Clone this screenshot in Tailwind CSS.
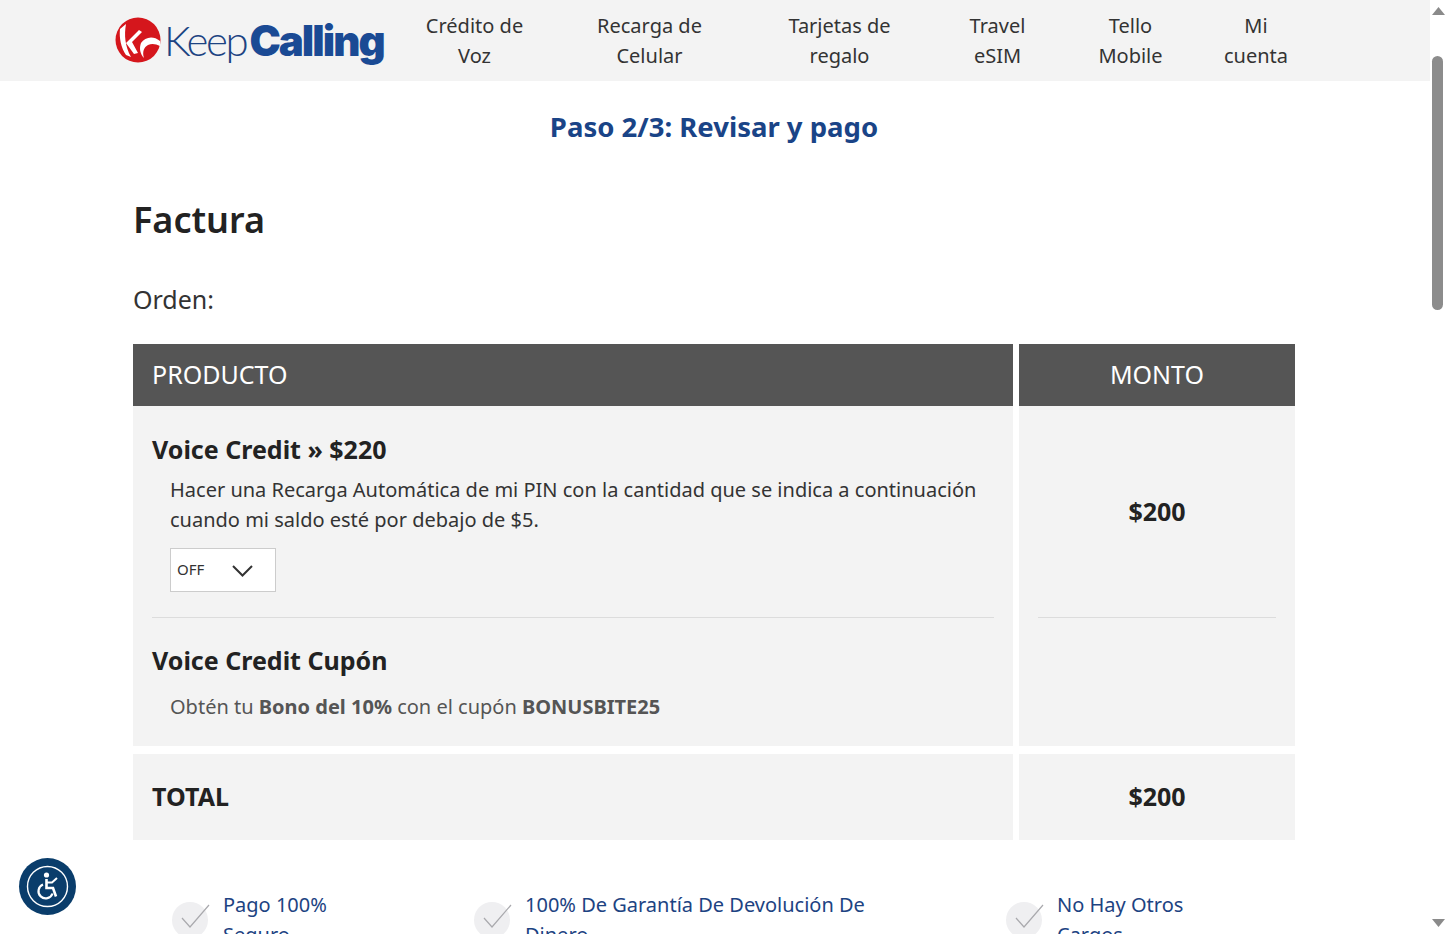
<!DOCTYPE html>
<html lang="es">
<head>
<meta charset="utf-8">
<title>Factura</title>
<script src="https://cdn.jsdelivr.net/npm/@tailwindcss/browser@4"></script>
</head>
<body class="relative h-[934px] w-[1447px] overflow-hidden bg-white font-['Noto_Sans',sans-serif] text-[#222]">
<header class="flex h-[81px] w-[1430px] bg-[#f3f3f3]">
  <a class="ml-[115px] flex h-[81px] w-[273.5px] items-center pb-[2px]">
    <svg class="h-[46px] w-[46px] shrink-0" viewBox="0 0 46 46">
      <circle cx="23" cy="23" r="22.5" fill="#d5161c"/>
      <path d="M5 12 L11 7 C9 18 10 29 16 40 L11 38 C6 31 4 21 5 12 Z" fill="#fff"/>
      <path d="M11 26 L24 13 L27 15 L17 25 L23 36 L19 37 Z" fill="#fff"/>
      <path d="M45 24 C38 18 30 20 26 26 C24 31 25 37 29 41 C27 35 29 30 33 28 C37 26 41 27 45 29 Z" fill="#fff"/>
    </svg>
    <span class="ml-[3px] font-['Lato',sans-serif] text-[42px] leading-none font-light tracking-[-2.4px] text-[#1d4382]">Keep</span><span class="ml-[3px] mt-[3px] font-['Inter',sans-serif] text-[42px] leading-none font-black tracking-[-2px] text-[#1a4a94]">Calling</span>
  </a>
  <nav class="flex text-center text-[20px] leading-[30px] text-[#333]">
    <a class="w-[172px] pt-[11px]">Crédito de<br>Voz</a>
    <a class="w-[178px] pt-[11px]">Recarga de<br>Celular</a>
    <a class="w-[202px] pt-[11px]">Tarjetas de<br>regalo</a>
    <a class="w-[114px] pt-[11px]">Travel<br>eSIM</a>
    <a class="w-[152px] pt-[11px]">Tello<br>Mobile</a>
    <a class="w-[99px] pt-[11px]">Mi<br>cuenta</a>
  </nav>
</header>

<main class="ml-[133px] w-[1162px]">
  <h2 class="mt-[25px] text-center text-[27.5px] leading-[42px] font-bold text-[#1a4487]">Paso 2/3: Revisar y pago</h2>
  <h1 class="mt-[48px] text-[36px] leading-[48px] font-semibold text-[#222]">Factura</h1>
  <p class="mt-[36px] text-[25px] leading-[38px] text-[#333]">Orden:</p>

  <div class="mt-[26px] grid grid-cols-[880px_276px] gap-x-[6px]">
    <div class="flex h-[62px] items-center bg-[#555] pl-[19px] text-[25px] text-white">PRODUCTO</div>
    <div class="flex h-[62px] items-center justify-center bg-[#555] text-[25px] text-white">MONTO</div>

    <div class="h-[340px] bg-[#f3f3f3] px-[19px]">
      <div class="h-[212px] border-b border-[#dcdcdc]">
        <h3 class="pt-[25px] text-[25px] leading-[36px] font-bold text-[#222]">Voice Credit » $220</h3>
        <p class="mt-[8px] pl-[18px] text-[20px] leading-[30px] text-[#333]">Hacer una Recarga Automática de mi PIN con la cantidad que se indica a continuación<br>cuando mi saldo esté por debajo de $5.</p>
        <div class="mt-[13px] ml-[18px] flex h-[44px] w-[106px] items-center border border-[#ccc] bg-white pl-[6px] text-[15px] text-[#333]">
          <span class="mt-[-2px]">OFF</span>
          <svg class="ml-[28px] mt-[2px] h-[12px] w-[21px]" viewBox="0 0 21 12" fill="none" stroke="#333" stroke-width="2"><path d="M1 1 L10.5 10.5 L20 1"/></svg>
        </div>
      </div>
      <h3 class="pt-[24px] text-[25px] leading-[36px] font-bold text-[#222]">Voice Credit Cupón</h3>
      <p class="mt-[14px] pl-[18px] text-[20px] leading-[30px] text-[#555]">Obtén tu <b class="font-bold">Bono del 10%</b> con el cupón <b class="font-bold">BONUSBITE25</b></p>
    </div>
    <div class="h-[340px] bg-[#f3f3f3] px-[19px]">
      <div class="flex h-[212px] items-center justify-center border-b border-[#dcdcdc] text-[25px] font-bold text-[#222]"><span class="mt-[1px]">$200</span></div>
    </div>

    <div class="mt-[8px] flex h-[86px] items-center bg-[#f3f3f3] pl-[19px] text-[25px] font-bold text-[#222]">TOTAL</div>
    <div class="mt-[8px] flex h-[86px] items-center justify-center bg-[#f3f3f3] text-[25px] font-bold text-[#222]">$200</div>
  </div>

  <ul class="mt-[50px] flex text-[20px] leading-[30px] text-[#1d4382]">
    <li class="ml-[39px] flex w-[302px]">
      <svg class="mt-[10px] h-[40px] w-[40px] shrink-0" viewBox="0 0 40 40"><circle cx="18" cy="20" r="18" fill="#efeff1"/><path d="M10 18 L18 27 L37 5" fill="none" stroke="#a9a9ad" stroke-width="1.2"/></svg>
      <span class="ml-[11px] w-[130px]">Pago 100% Seguro</span>
    </li>
    <li class="flex w-[532px]">
      <svg class="mt-[10px] h-[40px] w-[40px] shrink-0" viewBox="0 0 40 40"><circle cx="18" cy="20" r="18" fill="#efeff1"/><path d="M10 18 L18 27 L37 5" fill="none" stroke="#a9a9ad" stroke-width="1.2"/></svg>
      <span class="ml-[11px] w-[360px]">100% De Garantía De Devolución De Dinero</span>
    </li>
    <li class="flex w-[250px]">
      <svg class="mt-[10px] h-[40px] w-[40px] shrink-0" viewBox="0 0 40 40"><circle cx="18" cy="20" r="18" fill="#efeff1"/><path d="M10 18 L18 27 L37 5" fill="none" stroke="#a9a9ad" stroke-width="1.2"/></svg>
      <span class="ml-[11px] w-[140px]">No Hay Otros Cargos</span>
    </li>
  </ul>
</main>

<!-- accessibility button -->
<button class="absolute left-[19px] top-[858px] flex h-[57px] w-[57px] items-center justify-center rounded-full bg-[#0a3d6b]">
  <svg class="h-[43px] w-[43px]" viewBox="0 0 43 43" fill="none">
    <circle cx="21.5" cy="21.5" r="20" stroke="#fff" stroke-width="1.4"/>
    <circle cx="20.5" cy="10" r="2.6" fill="#fff"/>
    <path d="M20.5 14 L20.5 23 L27 23 L30 31.5" stroke="#fff" stroke-width="2.6" fill="none"/>
    <path d="M20.5 17.5 L26 17.5 L31 13" stroke="#fff" stroke-width="2" fill="none"/>
    <path d="M17 19.5 A7.2 7.2 0 1 0 26.5 28.5" stroke="#fff" stroke-width="2.2" fill="none"/>
  </svg>
</button>

<!-- scrollbar -->
<div class="absolute right-0 top-0 h-[934px] w-[17px] bg-white">
  <svg class="absolute left-[2px] top-[7px] h-[8px] w-[13px]" viewBox="0 0 13 8"><path d="M6.5 0 L13 8 L0 8 Z" fill="#8a8a8a"/></svg>
  <div class="absolute left-[2px] top-[56px] h-[254px] w-[11px] rounded-full bg-[#8c8c8c]"></div>
  <svg class="absolute left-[2px] bottom-[7px] h-[8px] w-[13px]" viewBox="0 0 13 8"><path d="M0 0 L13 0 L6.5 8 Z" fill="#8a8a8a"/></svg>
</div>
</body>
</html>
